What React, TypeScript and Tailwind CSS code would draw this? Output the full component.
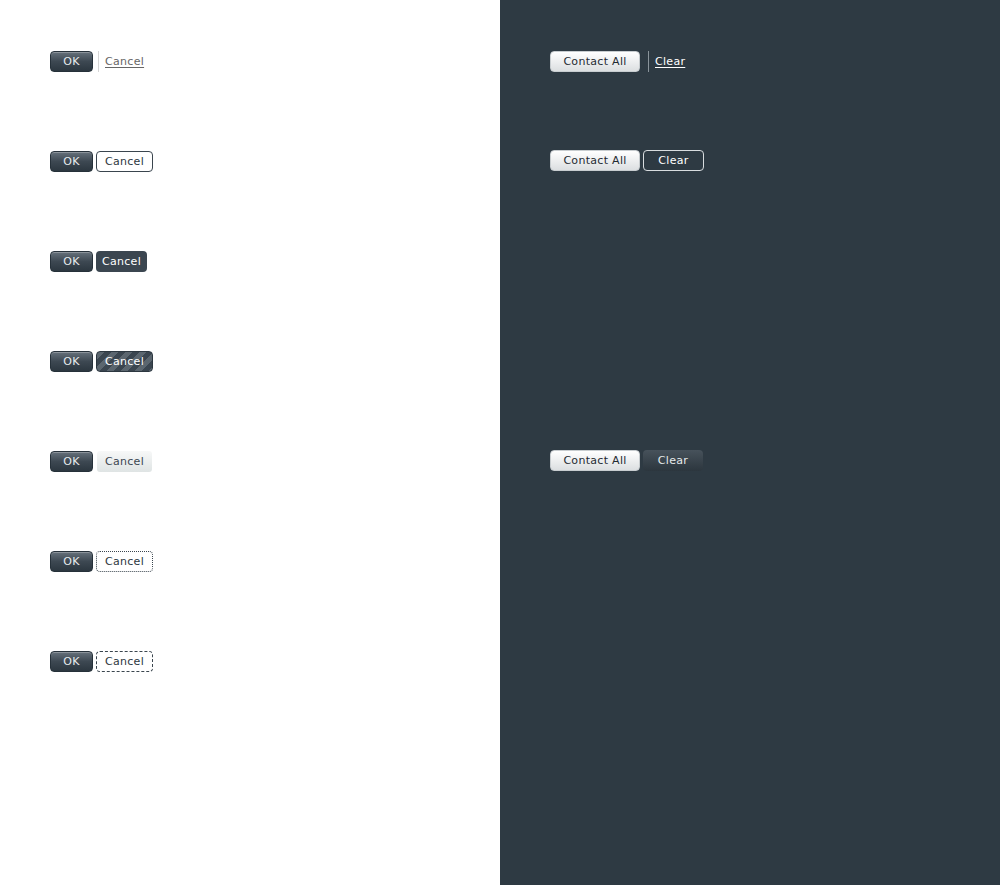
import React from "react";

const font = { fontFamily: '"DejaVu Sans", Verdana, sans-serif' };

function Ok() {
  return (
    <button className="h-[21px] w-[43px] rounded-[4px] border border-[#26313a] bg-gradient-to-b from-[#66717b] via-[#3d4852] to-[#2c3740] text-[11px] leading-none tracking-[0.3px] text-[#e8ecee] shadow-[inset_0_1px_0_rgba(255,255,255,0.25)]">
      OK
    </button>
  );
}

function ContactAll() {
  return (
    <button className="h-[21px] w-[90px] rounded-[4px] border border-[#c8cdd0] bg-gradient-to-b from-white to-[#dcdfe1] text-[11px] leading-none tracking-[0.3px] text-[#1f2a32]">
      Contact All
    </button>
  );
}

export default function App() {
  return (
    <div className="flex h-[885px] w-[1000px]" style={font}>
      <div className="flex w-[500px] flex-col gap-[79px] bg-white pl-[50px] pt-[51px]">
        <div className="flex h-[21px] items-center">
          <Ok />
          <span className="ml-[5px] h-[21px] w-px bg-[#d6d6d6]" />
          <a className="ml-[6px] mt-[2px] text-[11px] tracking-[0.3px] text-[#666] underline underline-offset-2">Cancel</a>
        </div>
        <div className="flex h-[21px] items-center gap-[3px]">
          <Ok />
          <button className="h-[21px] w-[57px] rounded-[4px] border border-[#3a454e] bg-white text-[11px] leading-none tracking-[0.3px] text-[#2c3740]">
            Cancel
          </button>
        </div>
        <div className="flex h-[21px] items-center gap-[3px]">
          <Ok />
          <button className="h-[21px] w-[51px] rounded-[4px] bg-[#3b4650] text-[11px] leading-none tracking-[0.3px] text-white">
            Cancel
          </button>
        </div>
        <div className="flex h-[21px] items-center gap-[3px]">
          <Ok />
          <button className="h-[21px] w-[57px] rounded-[4px] border border-[#2c3740] bg-[repeating-linear-gradient(135deg,#5b666f_0px,#5b666f_5px,#3b4650_5px,#3b4650_10px)] text-[11px] leading-none tracking-[0.3px] text-white">
            Cancel
          </button>
        </div>
        <div className="flex h-[21px] items-center gap-[4px]">
          <Ok />
          <button className="h-[21px] w-[55px] rounded-[3px] bg-gradient-to-b from-[#f7f8f8] to-[#dfe4e4] text-[11px] leading-none tracking-[0.3px] text-[#3b4650]">
            Cancel
          </button>
        </div>
        <div className="flex h-[21px] items-center gap-[3px]">
          <Ok />
          <button className="h-[21px] w-[57px] rounded-[4px] border border-dotted border-[#3a454e] bg-white text-[11px] leading-none tracking-[0.3px] text-[#2c3740]">
            Cancel
          </button>
        </div>
        <div className="flex h-[21px] items-center gap-[3px]">
          <Ok />
          <button className="h-[21px] w-[57px] rounded-[4px] border border-dashed border-[#3a454e] bg-white text-[11px] leading-none tracking-[0.3px] text-[#2c3740]">
            Cancel
          </button>
        </div>
      </div>
      <div className="flex w-[500px] flex-col bg-[#2e3a43] pl-[50px] pt-[51px]">
        <div className="flex h-[21px] items-center">
          <ContactAll />
          <span className="ml-[8px] h-[21px] w-px bg-[#8a949b]" />
          <a className="ml-[6px] mt-[2px] text-[11px] tracking-[0.3px] text-white underline underline-offset-2">Clear</a>
        </div>
        <div className="mt-[78px] flex h-[21px] items-center gap-[3px]">
          <ContactAll />
          <button className="h-[21px] w-[61px] rounded-[4px] border border-[#d8dcdf] text-[11px] leading-none tracking-[0.3px] text-white">
            Clear
          </button>
        </div>
        <div className="mt-[279px] flex h-[21px] items-center gap-[3px]">
          <ContactAll />
          <button className="h-[21px] w-[60px] rounded-[4px] bg-gradient-to-b from-[#47525b] to-[#2c363e] text-[11px] leading-none tracking-[0.3px] text-[#e6eaec]">
            Clear
          </button>
        </div>
      </div>
    </div>
  );
}
